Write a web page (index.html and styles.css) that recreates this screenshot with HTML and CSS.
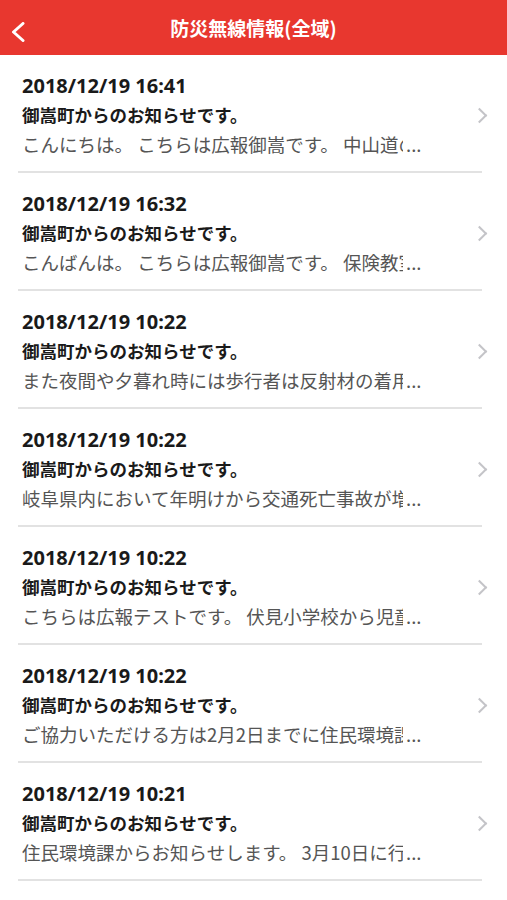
FILE: index.html
```html
<!doctype html>
<html>
<head>
<meta charset="utf-8">
<title>防災無線情報(全域)</title>
<link rel="stylesheet" href="styles.css">
</head>
<body>
<div class="bar">
	<a class="back" href="#"><svg width="16" height="20" viewBox="0 0 16 20"><path d="M13 1.5 L3.5 10 L13 18.5" fill="none" stroke="#fff" stroke-width="3" stroke-linecap="round" stroke-linejoin="round"/></svg></a>
	<h1>防災無線情報(全域)</h1>
</div>
<ul class="list">
	<li>
		<div class="txt">
			<p class="date">2018/12/19 16:41</p>
			<p class="ttl">御嵩町からのお知らせです。</p>
			<p class="body"><span class="cut">こんにちは。 こちらは広報御嵩です。 中山道の宿場町</span><span class="dots">...</span></p>
		</div>
		<i class="arr"></i>
	</li>
	<li>
		<div class="txt">
			<p class="date">2018/12/19 16:32</p>
			<p class="ttl">御嵩町からのお知らせです。</p>
			<p class="body"><span class="cut">こんばんは。 こちらは広報御嵩です。 保険教室のお知らせ</span><span class="dots">...</span></p>
		</div>
		<i class="arr"></i>
	</li>
	<li>
		<div class="txt">
			<p class="date">2018/12/19 10:22</p>
			<p class="ttl">御嵩町からのお知らせです。</p>
			<p class="body"><span class="cut">また夜間や夕暮れ時には歩行者は反射材の着用をお願いします</span><span class="dots">...</span></p>
		</div>
		<i class="arr"></i>
	</li>
	<li>
		<div class="txt">
			<p class="date">2018/12/19 10:22</p>
			<p class="ttl">御嵩町からのお知らせです。</p>
			<p class="body"><span class="cut">岐阜県内において年明けから交通死亡事故が増加しています</span><span class="dots">...</span></p>
		</div>
		<i class="arr"></i>
	</li>
	<li>
		<div class="txt">
			<p class="date">2018/12/19 10:22</p>
			<p class="ttl">御嵩町からのお知らせです。</p>
			<p class="body"><span class="cut">こちらは広報テストです。 伏見小学校から児童の下校</span><span class="dots">...</span></p>
		</div>
		<i class="arr"></i>
	</li>
	<li>
		<div class="txt">
			<p class="date">2018/12/19 10:22</p>
			<p class="ttl">御嵩町からのお知らせです。</p>
			<p class="body"><span class="cut">ご協力いただける方は2月2日までに住民環境課へ</span><span class="dots">...</span></p>
		</div>
		<i class="arr"></i>
	</li>
	<li>
		<div class="txt">
			<p class="date">2018/12/19 10:21</p>
			<p class="ttl">御嵩町からのお知らせです。</p>
			<p class="body"><span class="cut">住民環境課からお知らせします。 3月10日に行われる</span><span class="dots">...</span></p>
		</div>
		<i class="arr"></i>
	</li>
</ul>
</body>
</html>
```

FILE: styles.css
```css
*{margin:0;padding:0;list-style:none;}
body{background:#fff;font-family:"Noto Sans","Noto Sans CJK JP",sans-serif;color:#1a1a1a;}

.bar{position:relative;height:55px;background:#e8372f;display:flex;align-items:center;justify-content:center;}
.bar h1{color:#fff;font-size:19px;font-weight:bold;font-family:"Noto Sans CJK JP",sans-serif;}
.back{position:absolute;left:10px;top:22px;display:block;width:16px;height:20px;}
.back svg{display:block;}

.list li{display:flex;align-items:center;margin:0 25px 0 18px;padding:17px 0 13px 4px;border-bottom:2px solid #e2e2e2;height:86px;}
.txt{flex:1;min-width:0;}
.date{font-size:20px;font-weight:bold;line-height:28px;}
.ttl{font-size:17.5px;font-weight:bold;line-height:29px;font-family:"Noto Sans CJK JP",sans-serif;}
.body{display:flex;font-size:18.5px;line-height:30px;color:#555;font-family:"Noto Sans CJK JP",sans-serif;white-space:nowrap;}
.cut{display:block;width:381px;overflow:hidden;}
.dots{margin-left:3px;}

.arr{display:block;width:9px;height:9px;border-top:2px solid #c4c4c8;border-right:2px solid #c4c4c8;transform:rotate(45deg);margin:0 -3px 0 0;}
```
